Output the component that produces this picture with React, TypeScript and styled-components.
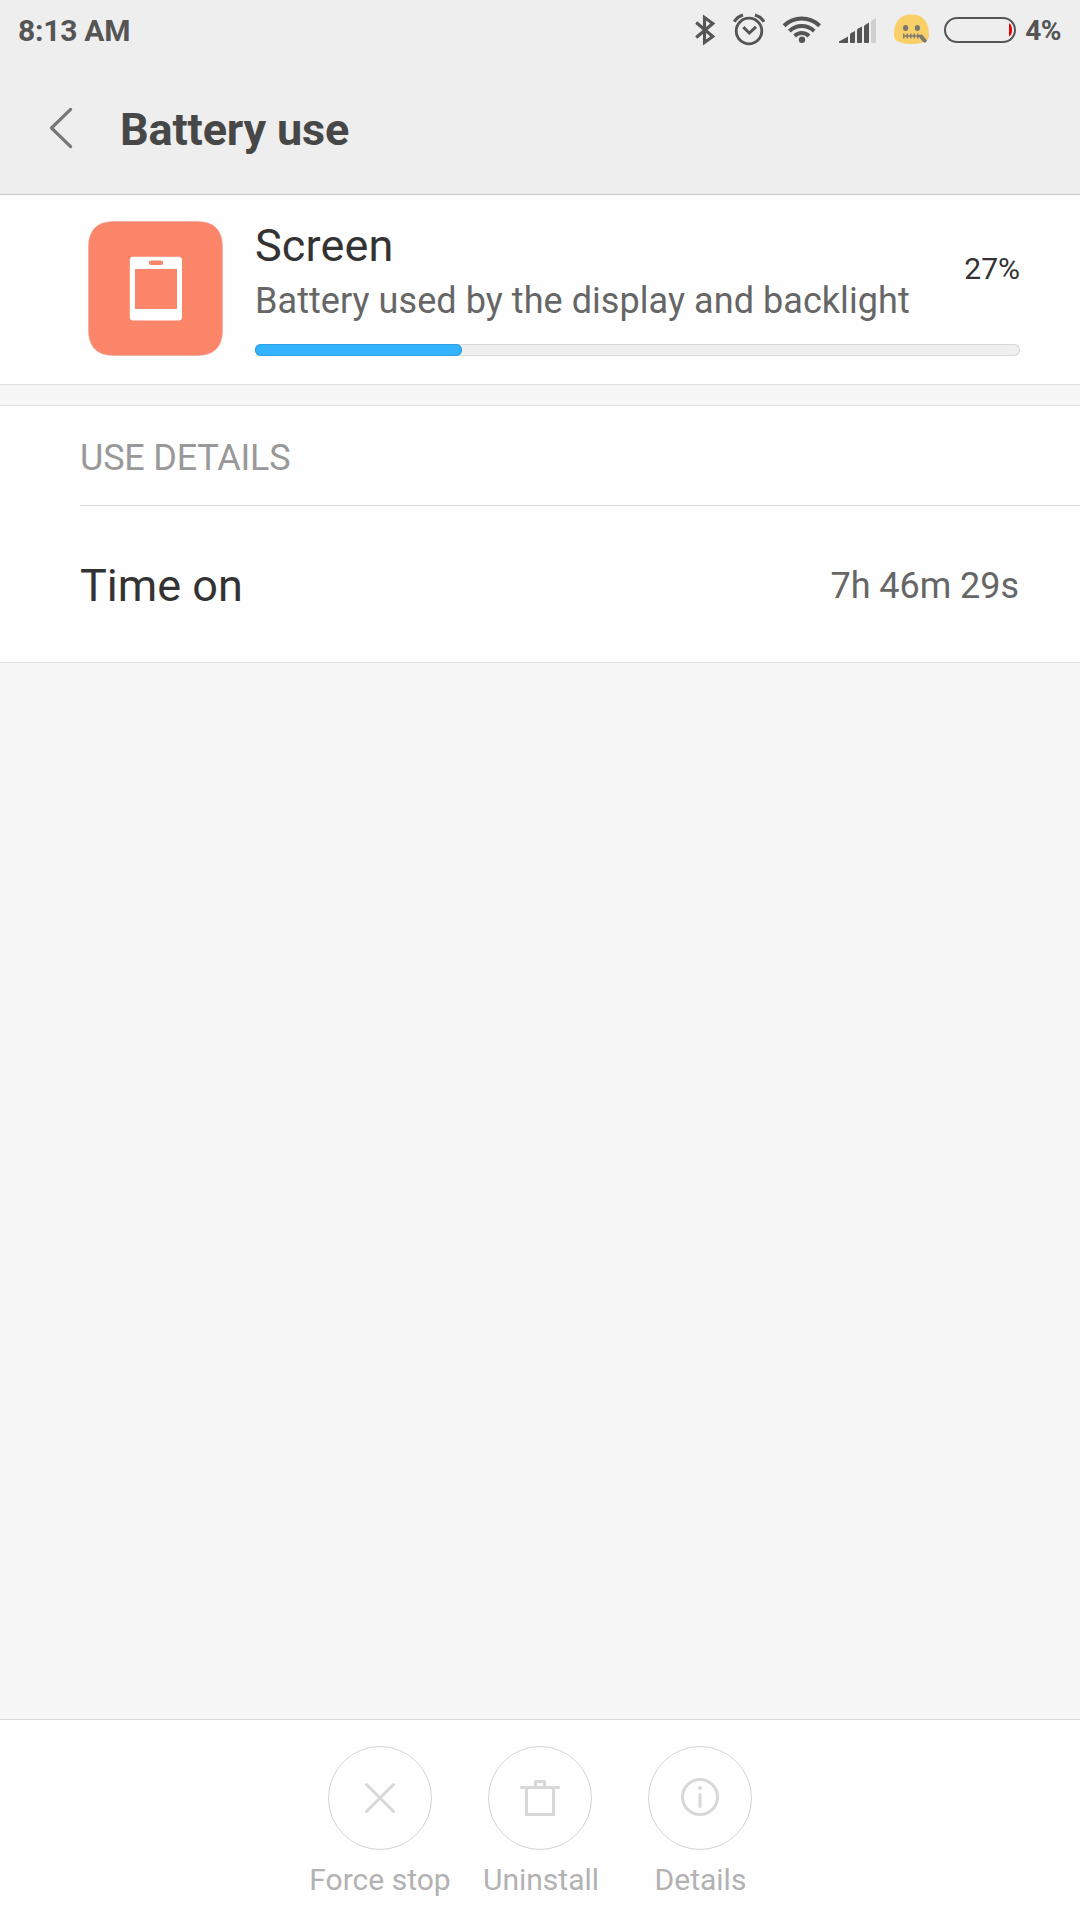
import React from "react";
import styled, { createGlobalStyle } from "styled-components";

const GlobalStyle = createGlobalStyle`
  * { box-sizing: border-box; }
  body {
    margin: 0;
    background: #f7f7f7;
    font-family: Roboto, "Noto Sans", sans-serif;
  }
`;

const Screen = styled.div`
  display: flex;
  flex-direction: column;
  width: 1080px;
  height: 1920px;
  background: #f7f7f7;
  white-space: nowrap;
`;

const Header = styled.header`
  height: 195px;
  background: #eeeeee;
  border-bottom: 1px solid #c8c8c8;
`;

const StatusBar = styled.div`
  display: flex;
  align-items: center;
  justify-content: space-between;
  height: 60px;
  padding: 0 19px 0 18px;
  color: #555555;
  font-weight: 700;
`;

const Clock = styled.span`
  padding-top: 1px;
  font-size: 30px;
  line-height: 35px;
  letter-spacing: -0.25px;
`;

const StatusIcons = styled.div`
  display: flex;
  align-items: center;
  height: 60px;
`;

const StatusIcon = styled.svg<{ $gap: number }>`
  display: block;
  height: 60px;
  margin-right: ${(p) => p.$gap}px;
`;

const BatteryLevel = styled.span`
  padding-top: 2px;
  font-size: 28px;
  line-height: 32px;
  letter-spacing: -0.5px;
`;

const TitleBar = styled.div`
  display: flex;
  align-items: center;
  height: 134px;
  padding-left: 48px;
`;

const BackIcon = styled.svg`
  display: block;
  margin: 2px 46px 0 0;
`;

const Title = styled.h1`
  margin: 6px 0 0;
  font-size: 45px;
  line-height: 54px;
  font-weight: 700;
  letter-spacing: -0.15px;
  color: #474747;
`;

const UsageCard = styled.section`
  display: flex;
  height: 190px;
  padding: 26px 60px 0 88px;
  background: #fefefe;
  border-bottom: 1px solid #e1e1e1;
`;

const AppIcon = styled.svg`
  display: block;
  flex: none;
  margin-right: 32px;
`;

const UsageBody = styled.div`
  flex: 1;
`;

const UsageText = styled.div`
  display: flex;
  justify-content: space-between;
  height: 123px;
`;

const AppName = styled.div`
  font-size: 45px;
  line-height: 50px;
  letter-spacing: 0.15px;
  color: #333333;
`;

const AppSummary = styled.div`
  margin-top: 6px;
  font-size: 36px;
  line-height: 48px;
  letter-spacing: 0.06px;
  color: #666666;
`;

const Percent = styled.div`
  margin-top: 30px;
  font-size: 30px;
  line-height: 36px;
  color: #333333;
`;

const Track = styled.div`
  height: 12px;
  border-radius: 6px;
  background: #efefef;
  box-shadow: inset 0 0 0 1px #d8d8d8;
`;

const Fill = styled.div<{ $value: number }>`
  width: ${(p) => p.$value}%;
  height: 12px;
  border-radius: 6px;
  background: #33b3ff;
  box-shadow: inset 0 0 0 1px #2f9fe2;
`;

const Details = styled.section`
  margin-top: 20px;
  height: 258px;
  padding-left: 80px;
  background: #fefefe;
  border-top: 1px solid #e1e1e1;
  border-bottom: 1px solid #e1e1e1;
`;

const SectionTitle = styled.h2`
  display: flex;
  align-items: center;
  margin: 0;
  height: 100px;
  padding-top: 4px;
  border-bottom: 1px solid #d8d8d8;
  font-size: 36px;
  font-weight: 400;
  letter-spacing: -0.2px;
  color: #999999;
`;

const Row = styled.div`
  display: flex;
  align-items: center;
  justify-content: space-between;
  height: 156px;
  padding: 4px 61px 0 0;
`;

const RowLabel = styled.span`
  padding-bottom: 2px;
  font-size: 45px;
  color: #333333;
`;

const RowValue = styled.span`
  font-size: 36px;
  letter-spacing: -0.05px;
  color: #666666;
`;

const ActionBar = styled.footer`
  display: flex;
  justify-content: center;
  margin-top: auto;
  height: 201px;
  padding-top: 26px;
  background: #fefefe;
  border-top: 1px solid #d8d8d8;
`;

const Action = styled.button`
  display: flex;
  flex-direction: column;
  align-items: center;
  width: 160px;
  padding: 0;
  border: 0;
  background: none;
  font: 400 30px/36px Roboto, "Noto Sans", sans-serif;
  color: #b2b2b2;
`;

const ActionLabel = styled.span<{ $indent: number }>`
  padding-left: ${(p) => p.$indent}px;
`;

const ActionCircle = styled.svg`
  display: block;
  margin-bottom: 12px;
`;

const icon = { fill: "none", stroke: "#d8d8d8", strokeWidth: 3 } as const;

interface ActionProps {
  label: string;
  indent?: number;
  children: React.ReactNode;
}

function ActionButton({ label, indent = 0, children }: ActionProps) {
  return (
    <Action>
      <ActionCircle width="104" height="104" viewBox="0 0 104 104">
        <circle cx="52" cy="52" r="51.5" fill="none" stroke="#d4d4d4" strokeWidth="1" />
        {children}
      </ActionCircle>
      <ActionLabel $indent={indent}>{label}</ActionLabel>
    </Action>
  );
}

export default function App() {
  return (
    <Screen>
      <GlobalStyle />
      <Header>
        <StatusBar>
          <Clock>8:13 AM</Clock>
          <StatusIcons>
            <StatusIcon $gap={18} width="20" viewBox="695 0 20 60">
              <path
                d="M696.2 22.5L712.8 36.5L704.5 42.5V17.5L712.8 23.5L696.2 37.5"
                fill="none"
                stroke="#555"
                strokeWidth="3.1"
              />
            </StatusIcon>
            <StatusIcon $gap={17} width="32" viewBox="733 0 32 60">
              <g fill="none" stroke="#555" strokeWidth="2.8">
                <circle cx="749" cy="31" r="12.8" />
                <path d="M743.3 27.2L749.3 33L756 26.8" strokeWidth="3" />
                <path d="M734.3 21.8Q737 16.8 743 15M763.9 21.8Q761 16.8 755 15" strokeWidth="3.2" />
              </g>
            </StatusIcon>
            <StatusIcon $gap={17} width="40" viewBox="782 0 40 60">
              <g fill="none" stroke="#555" strokeWidth="4">
                <path d="M784 25.8A25.5 25.5 0 0 1 819.6 25.8" />
                <path d="M789.4 31.2A17.6 17.6 0 0 1 814.2 31.2" />
                <path d="M794.6 36A10 10 0 0 1 809 36" />
              </g>
              <circle cx="802" cy="39.8" r="3.2" fill="#555" />
            </StatusIcon>
            <StatusIcon $gap={17} width="38" viewBox="839 0 38 60">
              <g fill="#555">
                <path d="M839 43V41.5L848 36.5V43Z" />
                <path d="M850 43V34.5Q850 33.5 851 33L855 31V42Q855 43 854 43H851Q850 43 850 42Z" />
                <path d="M857 42V30.5Q857 29 858 28.5L862 26.5V42Q862 43 861 43H858Q857 43 857 42Z" />
                <path d="M864 42V26.5Q864 25.5 865 25L869 22.5V42Q869 43 868 43H865Q864 43 864 42Z" />
              </g>
              <path
                d="M871 42V22.5Q871 21 872 20.5L876 18V42Q876 43 875 43H872Q871 43 871 42Z"
                fill="#d0d0d0"
              />
            </StatusIcon>
            <StatusIcon $gap={14} width="36" viewBox="894 0 36 60">
              <path
                d="M894 34C894 22 900 14.5 911.5 14.5S929 22 929 34C929 38 928.5 39.5 925.5 41.2C921 43.3 917 44 911.5 44S902 43.3 897.5 41.2C894.5 39.5 894 38 894 34Z"
                fill="#f8d067"
              />
              <g fill="#7b7872">
                <ellipse cx="905.6" cy="28" rx="2.6" ry="3" />
                <ellipse cx="917.4" cy="28" rx="2.6" ry="3" />
                <path d="M917.5 35L922 34.5L927 40.5L925.5 42.8L923 42Z" />
              </g>
              <path
                d="M903 36H920M903.8 33.5V38.5M907.3 33.5V38.5M910.8 33.5V38.5M914.3 33.5V38.5M917.8 33.5V38.5"
                stroke="#7b7872"
                strokeWidth="1.4"
              />
            </StatusIcon>
            <StatusIcon $gap={9} width="72" viewBox="944 0 72 60">
              <rect x="945" y="18" width="70" height="24" rx="12" fill="none" stroke="#555" strokeWidth="2" />
              <path d="M1009 23Q1012 25 1012 30T1009 36.5Z" fill="#e60000" />
            </StatusIcon>
            <BatteryLevel>4%</BatteryLevel>
          </StatusIcons>
        </StatusBar>
        <TitleBar>
          <BackIcon width="26" height="42" viewBox="0 0 26 42">
            <path d="M22.6 2.4L3.5 21L22.6 39.6" fill="none" stroke="#777" strokeWidth="3.2" strokeLinecap="round" strokeLinejoin="round" />
          </BackIcon>
          <Title>Battery use</Title>
        </TitleBar>
      </Header>

      <UsageCard>
        <AppIcon width="135" height="135" viewBox="0 0 135 135">
          <path
            d="M0.5 26Q0.5 0.5 26 0.5H109Q134.5 0.5 134.5 26V109Q134.5 134.5 109 134.5H26Q0.5 134.5 0.5 109Z"
            fill="#fb8569"
            stroke="#eba596"
            strokeWidth="0.6"
          />
          <rect x="41.8" y="35.8" width="52.2" height="63.8" rx="3.5" fill="#fff" />
          <rect x="47" y="48" width="42" height="40" fill="#fb8569" />
          <rect x="60.8" y="39.5" width="14.4" height="4.6" rx="2.3" fill="#fb8569" />
        </AppIcon>
        <UsageBody>
          <UsageText>
            <div>
              <AppName>Screen</AppName>
              <AppSummary>Battery used by the display and backlight</AppSummary>
            </div>
            <Percent>27%</Percent>
          </UsageText>
          <Track>
            <Fill $value={27} />
          </Track>
        </UsageBody>
      </UsageCard>

      <Details>
        <SectionTitle>USE DETAILS</SectionTitle>
        <Row>
          <RowLabel>Time on</RowLabel>
          <RowValue>7h 46m 29s</RowValue>
        </Row>
      </Details>

      <ActionBar>
        <ActionButton label="Force stop">
          <path d="M38.5 38.5L65.5 65.5M65.5 38.5L38.5 65.5" {...icon} strokeLinecap="round" />
        </ActionButton>
        <ActionButton label="Uninstall" indent={2}>
          <path d="M33.5 41.5H70.5" {...icon} strokeLinecap="round" />
          <path d="M38.5 41.5V68.5H65.5V41.5M47.5 41.5V35.5H56.5V41.5" {...icon} strokeLinejoin="round" />
        </ActionButton>
        <ActionButton label="Details" indent={1}>
          <circle cx="52" cy="51" r="17.5" {...icon} />
          <path d="M52 48.5V60.5" {...icon} strokeLinecap="round" />
          <circle cx="52" cy="42" r="2" fill="#d8d8d8" />
        </ActionButton>
      </ActionBar>
    </Screen>
  );
}
